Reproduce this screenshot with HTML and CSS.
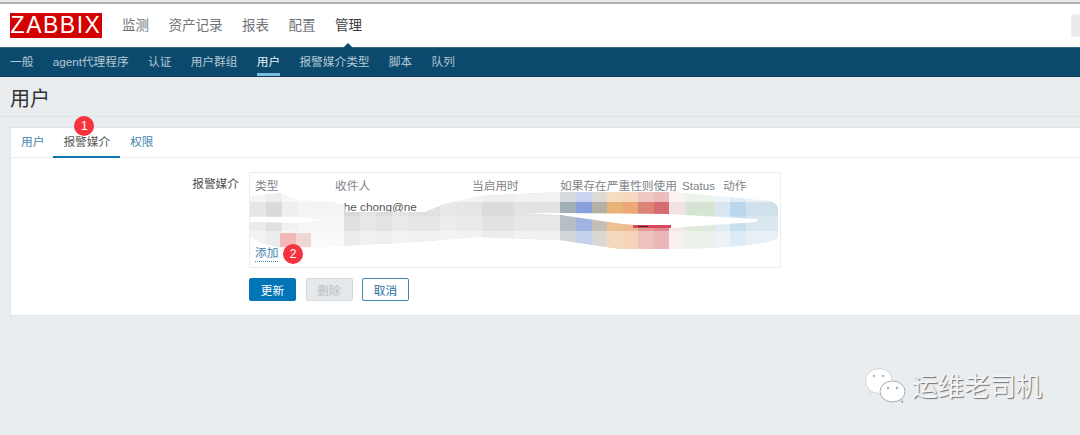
FILE: index.html
```html
<!DOCTYPE html>
<html lang="zh-CN">
<head>
    <meta charset="UTF-8">
    <title>用户</title>
    <link rel="stylesheet" href="styles.css">
</head>
<body>
    <div class="top-strip"></div>
    <header class="header">
        <div class="logo">ZABBIX</div>
        <nav class="main-nav">
            <a>监测</a>
            <a>资产记录</a>
            <a>报表</a>
            <a>配置</a>
            <a class="active">管理</a>
        </nav>
        <div class="search"></div>
    </header>
    <nav class="sub-nav">
        <a>一般</a>
        <a>agent代理程序</a>
        <a>认证</a>
        <a>用户群组</a>
        <a class="active">用户</a>
        <a>报警媒介类型</a>
        <a>脚本</a>
        <a>队列</a>
    </nav>
    <h1 class="page-title">用户</h1>

    <section class="card">
        <div class="tabs">
            <a>用户</a>
            <a class="active">报警媒介<span class="badge badge-tab">1</span></a>
            <a>权限</a>
        </div>
        <div class="form-row">
            <label class="form-label">报警媒介</label>
            <div class="form-body">
                <div class="media-box">
                    <div class="media-head">
                        <span>类型</span>
                        <span>收件人</span>
                        <span>当启用时</span>
                        <span>如果存在严重性则使用</span>
                        <span>Status</span>
                        <span>动作</span>
                    </div>
                    <div class="media-row">zhe chong@ne</div>
                    <svg class="smear" viewBox="249 172 532 96">
                        <defs>
                            <clipPath id="smearShape">
                                <path d="M250 197 L280 193 L296 200 L330 202 L345 205 L346 212 L425 212 L445 204 L480 196 L560 192 L670 192 L770 201 Q779 203 778 212 L778 238 Q760 248 670 249 L620 249 L560 240 L480 237 L400 243 L310 247 L290 250 L262 243 L250 236 Z"/>
                            </clipPath>
                        </defs>
                        <g clip-path="url(#smearShape)">
                            <rect x="250" y="190" width="310" height="62" fill="#e4e5e7"/>
                            <rect x="250" y="190" width="16" height="62" fill="#e6e6e8"/>
                            <rect x="266" y="190" width="16" height="62" fill="#d9dadc"/>
                            <rect x="282" y="190" width="16" height="62" fill="#efefef"/>
                            <rect x="298" y="190" width="46" height="62" fill="#f4f4f5"/>
                            <rect x="344" y="190" width="16" height="62" fill="#d8d9db"/>
                            <rect x="360" y="190" width="16" height="62" fill="#e3e3e5"/>
                            <rect x="376" y="190" width="16" height="62" fill="#dcdcde"/>
                            <rect x="408" y="190" width="32" height="62" fill="#dfe0e2"/>
                            <rect x="440" y="190" width="16" height="62" fill="#e9e9ea"/>
                            <rect x="482" y="190" width="32" height="62" fill="#dcdbdc"/>
                            <rect x="514" y="190" width="46" height="62" fill="#e2e3e4"/>
                            <rect x="560" y="190" width="16" height="62" fill="#a3afb6"/>
                            <rect x="576" y="190" width="16" height="62" fill="#8aa0da"/>
                            <rect x="592" y="190" width="15" height="62" fill="#b4b0a4"/>
                            <rect x="607" y="190" width="16" height="62" fill="#e8b378"/>
                            <rect x="623" y="190" width="15" height="62" fill="#eca878"/>
                            <rect x="638" y="190" width="16" height="62" fill="#dc8478"/>
                            <rect x="654" y="190" width="15" height="62" fill="#d86b72"/>
                            <rect x="669" y="190" width="16" height="62" fill="#f3e2e2"/>
                            <rect x="685" y="190" width="30" height="62" fill="#d6e5d3"/>
                            <rect x="715" y="190" width="15" height="62" fill="#d9e6f0"/>
                            <rect x="730" y="190" width="16" height="62" fill="#b9d6ec"/>
                            <rect x="746" y="190" width="34" height="62" fill="#d0e1ec"/>
                            <rect x="250" y="190" width="530" height="12" fill="#fff" opacity=".55"/>
                            <rect x="250" y="216" width="530" height="15" fill="#fff" opacity=".2"/>
                            <rect x="250" y="231" width="530" height="21" fill="#fff" opacity=".5"/>
                            <rect x="280" y="233" width="16" height="14" fill="#f3b9b9"/>
                            <rect x="296" y="233" width="15" height="14" fill="#f1d6d4"/>
                        </g>
                        <path d="M250 217 L300 217 L322 220 L300 223 L250 222 Z" fill="#fff"/>
                        <path d="M523 213 L560 213 L667 214 L757 219 L757 222 L670 228 L623 224 L560 215 Z" fill="#fff"/>
                        <rect x="633" y="225" width="38" height="3" fill="#d8485a"/>
                        <rect x="638" y="226" width="10" height="1" fill="#40262a"/>
                    </svg>
                    <a class="add-link">添加</a>
                    <span class="badge badge-add">2</span>
                </div>
                <div class="buttons">
                    <button class="btn btn-primary">更新</button>
                    <button class="btn btn-disabled">删除</button>
                    <button class="btn btn-outline">取消</button>
                </div>
            </div>
        </div>
    </section>

    <div class="watermark">
        <svg class="wechat" viewBox="0 0 42 36">
            <path d="M6 22 L5 27 L11 24 Z" fill="#fff" stroke="#d5d8da"/>
            <ellipse cx="14" cy="14" rx="13.500" ry="12.500" fill="#fff" stroke="#d5d8da"/>
            <path d="M33 32 L38 36 L36 30 Z" fill="#fff" stroke="#a9adb0"/>
            <ellipse cx="27.500" cy="24.500" rx="12.500" ry="10.500" fill="#fff" stroke="#a9adb0"/>
            <circle cx="9" cy="9" r="1.300" fill="#b9bdc0"/>
            <circle cx="18" cy="9" r="1.300" fill="#b9bdc0"/>
            <circle cx="23" cy="21" r="1.200" fill="#a9adb0"/>
            <circle cx="32" cy="21" r="1.200" fill="#a9adb0"/>
        </svg>
        <span class="watermark-text">运维老司机</span>
    </div>
</body>
</html>
```

FILE: styles.css
```css
* {
    box-sizing: border-box;
}
html, body {
    height: 435px;
    overflow: hidden;
}
body {
    position: relative;
    margin: 0;
    background-color: #e9edf0;
    font-family: "Liberation Sans", "Noto Sans CJK SC", sans-serif;
    font-size: 11.7px;
    color: #4b4b4b;
}
.top-strip {
    height: 4px;
    background-color: #e8e8e8;
    border-bottom: 2px solid #b3b3b3;
}
.header {
    display: flex;
    align-items: center;
    height: 43px;
    padding-left: 10px;
    background-color: #fff;
}
.logo {
    width: 92px;
    height: 25px;
    background-color: #d40000;
    color: #fff;
    font-size: 23px;
    line-height: 25px;
    text-align: center;
    letter-spacing: 1.500px;
}
.main-nav {
    display: flex;
    gap: 19.500px;
    margin-left: 20px;
    padding-bottom: 4px;
    font-size: 13.5px;
    color: #6f7478;
}
.main-nav a {
    position: relative;
}
.main-nav .active {
    color: #3d3d3d;
}
.main-nav .active::after {
    content: "";
    position: absolute;
    left: 7px;
    bottom: -15px;
    border-left: 6px solid transparent;
    border-right: 6px solid transparent;
    border-bottom: 6px solid #0b4a6d;
}
.search {
    width: 9px;
    height: 23px;
    margin-left: auto;
    background-color: #ebebeb;
    border: 1px solid #f2f2f2;
    border-right: none;
}
.sub-nav {
    display: flex;
    gap: 19.300px;
    height: 30px;
    padding-left: 10px;
    background-color: #0b4a6d;
    border-top: 1px solid #3c6a85;
    border-bottom: 1px solid #123e59;
    color: #b6c8d4;
}
.sub-nav a {
    line-height: 27px;
}
.sub-nav .active {
    color: #e6f0f6;
    border-bottom: 3px solid #79bde0;
    height: 28px;
}
.page-title {
    height: 40px;
    margin: 0 0 10px;
    padding-left: 10px;
    font-size: 20px;
    font-weight: normal;
    line-height: 44px;
    color: #333;
    border-bottom: 1px solid #dfe3e6;
}
.card {
    height: 189px;
    margin-left: 10px;
    background-color: #fff;
    border: 1px solid #dfe4e7;
    border-right: none;
}
.tabs {
    display: flex;
    height: 30px;
    border-bottom: 1px solid #ebeef0;
}
.tabs a {
    position: relative;
    padding: 0 10px;
    line-height: 28px;
    color: #3f85ad;
}
.tabs a:first-child {
    padding-right: 9px;
}
.tabs .active {
    height: 30px;
    color: #555;
    border-bottom: 2px solid #0f77b0;
}
.badge {
    position: absolute;
    width: 20px;
    height: 20px;
    border-radius: 50%;
    background-color: #f5333f;
    color: #fff;
    font-size: 12px;
    line-height: 20px;
    text-align: center;
}
.badge-tab {
    left: 21px;
    top: -12px;
}
.badge-add {
    left: 33px;
    top: 71px;
}
.form-row {
    display: flex;
    padding-top: 14px;
}
.form-label {
    width: 228px;
    padding-top: 2px;
    text-align: right;
}
.form-body {
    margin-left: 10px;
}
.media-box {
    position: relative;
    width: 532px;
    height: 96px;
    padding: 5px 5px 0;
    border: 1px solid #ebeef0;
    color: #7f8589;
}
.media-head {
    display: grid;
    grid-template-columns: 80px 137px 88px 122px 41px auto;
    line-height: 16px;
}
.media-row {
    padding: 5px 0 0 83px;
    line-height: 16px;
    color: #555;
}
.smear {
    position: absolute;
    left: -1px;
    top: -1px;
    width: 532px;
    height: 96px;
    filter: blur(0.5px);
}
.add-link {
    position: absolute;
    left: 5px;
    top: 72px;
    line-height: 16px;
    color: #3f85ad;
    border-bottom: 1px dotted #3f85ad;
}
.buttons {
    display: flex;
    gap: 9.500px;
    margin-top: 10px;
}
.btn {
    width: 47px;
    height: 23px;
    padding: 0;
    border-radius: 2px;
    font-family: inherit;
    font-size: 11.7px;
}
.btn-primary {
    background-color: #0275b8;
    border: 1px solid #0275b8;
    color: #fff;
}
.btn-disabled {
    background-color: #e6e9eb;
    border: 1px solid #d5d9dc;
    color: #b5bcc0;
}
.btn-outline {
    background-color: #fff;
    border: 1px solid #3f85ad;
    color: #1f6f9f;
}
.watermark {
    position: absolute;
    left: 865px;
    top: 367px;
    display: flex;
    align-items: flex-start;
    gap: 5px;
}
.wechat {
    width: 42px;
    height: 36px;
}
.watermark-text {
    padding-top: 2px;
    font-size: 26px;
    line-height: 36px;
    color: #f4f5f6;
    text-shadow: 1px 1px 1px #6f7275;
}
```
